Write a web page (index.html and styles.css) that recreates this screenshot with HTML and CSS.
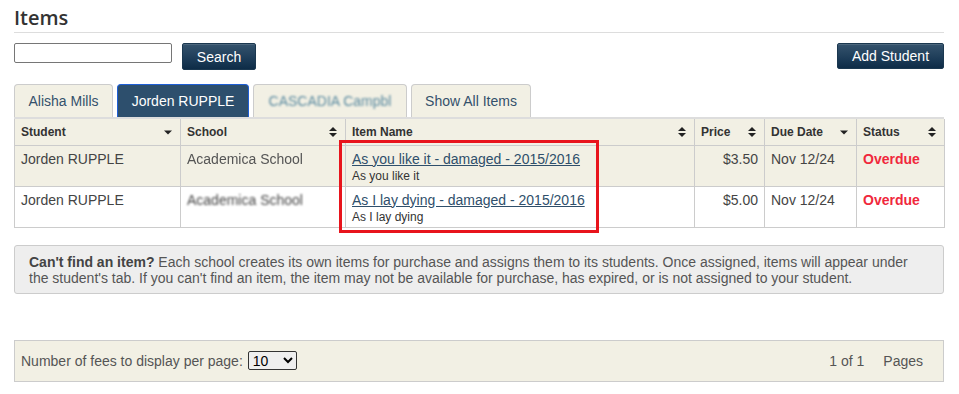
FILE: index.html
```html
<!DOCTYPE html>
<html>
<head>
<meta charset="utf-8">
<link rel="stylesheet" href="styles.css">
</head>
<body>
<div class="page">
  <h1 class="title">Items</h1>
  <div class="toolbar">
    <div class="search">
      <input class="search-input" type="text">
      <button class="btn">Search</button>
    </div>
    <button class="btn btn-add">Add Student</button>
  </div>
  <div class="tabs">
    <div class="tab tab-1">Alisha Mills</div>
    <div class="tab tab-2 tab-active">Jorden RUPPLE</div>
    <div class="tab tab-3"><span class="blur-strong">CASCADIA Campbl</span></div>
    <div class="tab tab-4">Show All Items</div>
  </div>
  <div class="table-wrap">
    <table class="grid">
      <colgroup>
        <col class="c-student"><col class="c-school"><col class="c-item"><col class="c-price"><col class="c-due"><col class="c-status">
      </colgroup>
      <thead>
        <tr>
          <th><div class="th-in"><span>Student</span><svg class="sort" width="8" height="10" viewBox="0 0 8 10"><path d="M0 3.5h8L4 7.5z" fill="#222"/></svg></div></th>
          <th><div class="th-in"><span>School</span><svg class="sort" width="8" height="10" viewBox="0 0 8 10"><path d="M0 4h8L4 0zM0 6h8L4 10z" fill="#222"/></svg></div></th>
          <th><div class="th-in"><span>Item Name</span><svg class="sort" width="8" height="10" viewBox="0 0 8 10"><path d="M0 4h8L4 0zM0 6h8L4 10z" fill="#222"/></svg></div></th>
          <th><div class="th-in"><span>Price</span><svg class="sort" width="8" height="10" viewBox="0 0 8 10"><path d="M0 4h8L4 0zM0 6h8L4 10z" fill="#222"/></svg></div></th>
          <th><div class="th-in"><span>Due Date</span><svg class="sort" width="8" height="10" viewBox="0 0 8 10"><path d="M0 3.5h8L4 7.5z" fill="#222"/></svg></div></th>
          <th><div class="th-in"><span>Status</span><svg class="sort" width="8" height="10" viewBox="0 0 8 10"><path d="M0 4h8L4 0zM0 6h8L4 10z" fill="#222"/></svg></div></th>
        </tr>
      </thead>
      <tbody>
        <tr class="row-alt">
          <td>Jorden RUPPLE</td>
          <td><span class="blur-light">Academica School</span></td>
          <td><a class="item-link" href="#">As you like it - damaged - 2015/2016</a><div class="item-sub">As you like it</div></td>
          <td class="num">$3.50</td>
          <td>Nov 12/24</td>
          <td class="status">Overdue</td>
        </tr>
        <tr>
          <td>Jorden RUPPLE</td>
          <td><span class="blur-strong dark">Academica School</span></td>
          <td><a class="item-link" href="#">As I lay dying - damaged - 2015/2016</a><div class="item-sub">As I lay dying</div></td>
          <td class="num">$5.00</td>
          <td>Nov 12/24</td>
          <td class="status">Overdue</td>
        </tr>
      </tbody>
    </table>
    <div class="highlight"></div>
  </div>
  <div class="notice"><p class="notice-text"><b>Can't find an item?</b> Each school creates its own items for purchase and assigns them to its students. Once assigned, items will appear under the student's tab. If you can't find an item, the item may not be available for purchase, has expired, or is not assigned to your student.</p></div>
  <div class="pager">
    <div class="pager-left">Number of fees to display per page:
      <select class="pager-select"><option>10</option></select>
    </div>
    <div class="pager-right"><span>1 of 1</span><span>Pages</span></div>
  </div>
</div>
</body>
</html>
```

FILE: styles.css
```css
* { box-sizing: border-box; }
html, body { margin: 0; padding: 0; background: #fff; }
body { font-family: "Liberation Sans", Arial, sans-serif; font-size: 14px; color: #444; }
.page { width: 930px; margin-left: 14px; }
.title {
  margin: 4px 0 0;
  height: 29px;
  font-family: "Open Sans", sans-serif;
  font-weight: 600;
  font-size: 20px;
  line-height: 28px;
  color: #333;
  border-bottom: 1px solid #ddd;
}
.toolbar { display: flex; justify-content: space-between; align-items: flex-start; margin-top: 10px; }
.search { display: flex; align-items: flex-start; gap: 10px; }
.search-input {
  width: 158px; height: 20px; margin: 0;
  border: 1px solid #767676; border-radius: 2px; padding: 1px 2px;
}
.btn {
  height: 27px; margin: 0; padding: 0 12px;
  font-family: "Liberation Sans", Arial, sans-serif; font-size: 14px; color: #fff;
  background: linear-gradient(#35536d, #1d3c58 60%, #0e2c47);
  border: 1px solid #1b3850; border-radius: 2px;
  box-shadow: inset 0 1px 0 rgba(255,255,255,0.12);
}
.btn-add { width: 107px; height: 26px; padding: 0; }
.search .btn { width: 74px; }
.tabs { display: flex; gap: 4px; margin-top: 14px; height: 33px; }
.tab {
  height: 33px; padding: 0; line-height: 33px; white-space: nowrap; overflow: hidden;
  text-align: center;
  background: #f2f0e4; border: 1px solid #ccc; border-bottom: none;
  border-radius: 4px 4px 0 0; color: #34516c; font-size: 14px;
}
.tab-1 { width: 99px; }
.tab-2 { width: 132px; }
.tab-3 { width: 154px; }
.tab-4 { width: 120px; }
.tab-active { background: #2d4f6d; border-color: #1f5fd6; color: #fff; }
.blur-strong { filter: blur(1.1px); color: #5a8aa0; }
.blur-strong.dark { color: #444; }
.blur-light { filter: blur(0.5px); color: #555; }
.table-wrap { position: relative; border-top: 2px solid #ddd; }
.grid { width: 930px; border-collapse: collapse; table-layout: fixed; }
.c-student { width: 166px; }
.c-school { width: 165px; }
.c-item { width: 349px; }
.c-price { width: 70px; }
.c-due { width: 92px; }
.c-status { width: 88px; }
.grid thead tr { height: 26px; }
.grid th {
  padding: 0 8px 0 6px; text-align: left;
  background: #f2f0e4; border: 1px solid #ccc; border-top: none;
  font-size: 12px; font-weight: bold; color: #333;
}
.th-in { display: flex; justify-content: space-between; align-items: center; }
.grid tbody tr { height: 41px; }
.grid td {
  padding: 5px 6px 3px; vertical-align: top;
  border: 1px solid #ccc; font-size: 14px; color: #444; line-height: 16px;
}
.row-alt td { background: #f2f0e4; }
.item-link { color: #2f4f6b; text-decoration: underline; line-height: 16px; }
.item-sub { font-size: 12px; color: #333; line-height: 14px; margin-top: 2px; }
.grid td.num { text-align: right; }
.grid td.status { color: #f0283c; font-weight: bold; }
.highlight {
  position: absolute; left: 325px; top: 21px; width: 260px; height: 93px;
  border: 3px solid #e8141c;
}
.notice {
  margin-top: 17px; padding: 8px 14px 7px;
  background: #eee; border: 1px solid #ccc; border-radius: 3px;
}
.notice-text { margin: 0; color: #555; font-size: 14px; line-height: 16px; }
.notice-text b { color: #444; }
.pager {
  margin-top: 46px; height: 42px;
  display: flex; justify-content: space-between; align-items: center;
  background: #f2f0e4; border: 1px solid #ccc; padding: 0 20px 0 6px;
  color: #555; font-size: 14px;
}
.pager-select { width: 49px; height: 19px; margin-left: 1px; font-size: 14px; font-family: "Liberation Sans", Arial, sans-serif; border: 1px solid #333; border-radius: 2px; padding: 0; }
.pager-right { display: flex; gap: 19px; }
```
